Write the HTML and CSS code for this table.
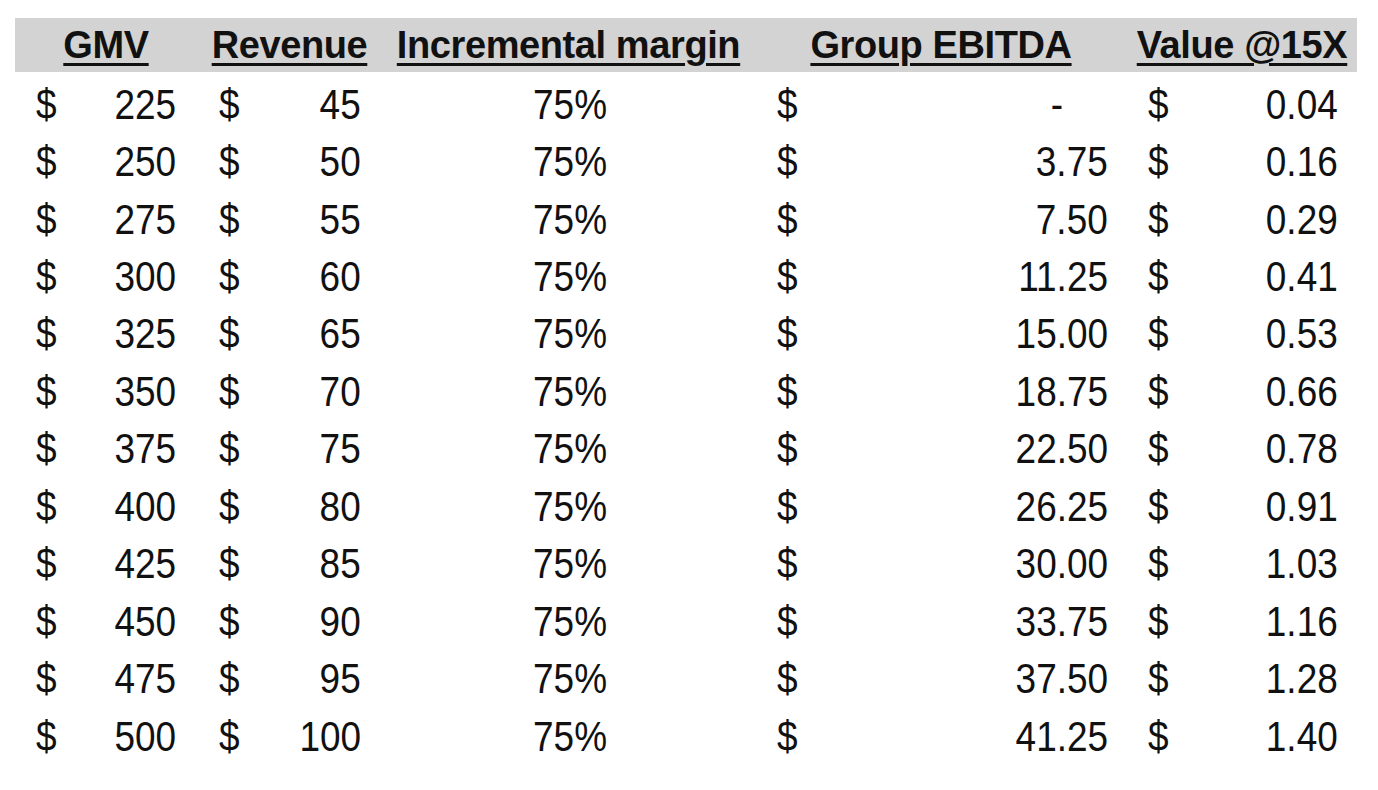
FILE: index.html
```html
<!DOCTYPE html>
<html>
<head>
<meta charset="utf-8">
<link rel="stylesheet" href="styles.css">
</head>
<body>
<div class="sheet">
  <div class="head">
    <div class="h"><span>GMV</span></div>
    <div class="h"><span>Revenue</span></div>
    <div class="h"><span>Incremental margin</span></div>
    <div class="h"><span>Group EBITDA</span></div>
    <div class="h"><span>Value @15X</span></div>
  </div>
  <div class="body" id="rows"></div>
</div>
<script>
const data=[
[225,45,"-","0.04"],[250,50,"3.75","0.16"],[275,55,"7.50","0.29"],[300,60,"11.25","0.41"],
[325,65,"15.00","0.53"],[350,70,"18.75","0.66"],[375,75,"22.50","0.78"],[400,80,"26.25","0.91"],
[425,85,"30.00","1.03"],[450,90,"33.75","1.16"],[475,95,"37.50","1.28"],[500,100,"41.25","1.40"]];
const rows=document.getElementById('rows');
for(const r of data){
  rows.insertAdjacentHTML('beforeend',
   `<div class="c a"><span class="cur">$</span><span class="num">${r[0]}</span></div>
    <div class="c b"><span class="cur">$</span><span class="num">${r[1]}</span></div>
    <div class="c m"><span class="pct">75%</span></div>
    <div class="c d"><span class="cur">$</span><span class="num${r[2]==='-'?' dash':''}">${r[2]}</span></div>
    <div class="c e"><span class="cur">$</span><span class="num">${r[3]}</span></div>`);
}
</script>
</body>
</html>
```
FILE: styles.css
```css
html,body{margin:0;padding:0;background:#fff;}
body{font-family:"Liberation Sans",Arial,sans-serif;color:#111;}
.sheet{margin:18px 0 0 15px;width:1342px;}
.head,.body{display:grid;grid-template-columns:182px 185px 373px 372px 230px;}
.head{background:#d3d3d3;height:54px;}
.h{display:flex;align-items:center;justify-content:center;font-weight:bold;font-size:38px;letter-spacing:-0.4px;padding-top:1px;}
.h span{text-decoration:underline;text-decoration-thickness:3px;text-underline-offset:5px;}
.body{padding-top:4px;grid-auto-rows:57.45px;}
.c{display:flex;align-items:center;justify-content:space-between;font-size:42px;}
.c span{display:inline-block;transform:scaleX(0.88);}
.cur{transform-origin:left center;}
.num{transform-origin:right center;}
.pct{transform-origin:center center;}
.a{padding:0 21px 0 21px;}
.b{padding:0 21px 0 22px;}
.m{justify-content:center;padding-left:3px;}
.d{padding:0 19px 0 22px;}
.e{padding:0 19px 0 21px;}
.dash{margin-right:45px;}
```
